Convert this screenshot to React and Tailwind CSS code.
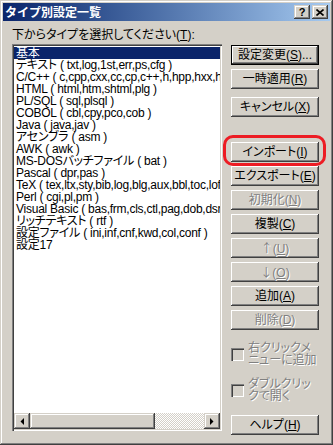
import React from "react";

const TYPES = [
  "基本",
  "テキスト ( txt,log,1st,err,ps,cfg )",
  "C/C++ ( c,cpp,cxx,cc,cp,c++,h,hpp,hxx,hh,inl )",
  "HTML ( html,htm,shtml,plg )",
  "PL/SQL ( sql,plsql )",
  "COBOL ( cbl,cpy,pco,cob )",
  "Java ( java,jav )",
  "アセンブラ ( asm )",
  "AWK ( awk )",
  "MS-DOSバッチファイル ( bat )",
  "Pascal ( dpr,pas )",
  "TeX ( tex,ltx,sty,bib,log,blg,aux,bbl,toc,lof,lot,idx,ind,glo )",
  "Perl ( cgi,pl,pm )",
  "Visual Basic ( bas,frm,cls,ctl,pag,dob,dsr,vb )",
  "リッチテキスト ( rtf )",
  "設定ファイル ( ini,inf,cnf,kwd,col,conf )",
  "設定17",
];

const RAISED =
  "shadow-[inset_-1px_-1px_#404040,inset_1px_1px_#fff,inset_-2px_-2px_#808080,inset_2px_2px_#d4d0c8]";
const RAISED_SB =
  "shadow-[inset_-1px_-1px_#404040,inset_1px_1px_#d4d0c8,inset_-2px_-2px_#808080,inset_2px_2px_#fff]";
const SUNKEN =
  "shadow-[inset_1px_1px_#808080,inset_2px_2px_#404040,inset_-1px_-1px_#fff,inset_-2px_-2px_#d4d0c8]";

function Btn({ label, accel, suffix = "", disabled, isDefault, arrow, className = "" }) {
  return (
    <div
      className={`flex h-[20px] w-[88px] shrink-0 items-center justify-center bg-[#d4d0c8] text-[12px] leading-[12px] ${
        isDefault ? "border border-black" : ""
      } ${RAISED} ${
        disabled ? "text-[#808080] [text-shadow:1px_1px_0_#fff]" : "text-black"
      } ${className}`}
    >
      <span className="whitespace-nowrap">
        <span className={arrow ? "font-['Noto_Sans_CJK_JP',sans-serif]" : ""}>{label}</span>(
        <u className="underline underline-offset-[1px]">{accel}</u>){suffix}
      </span>
    </div>
  );
}

function Check({ lines, className = "" }) {
  return (
    <div className={`flex items-center gap-[4px] ${className}`}>
      <div className={`h-[13px] w-[13px] shrink-0 bg-[#d4d0c8] ${SUNKEN}`} />
      <div className="text-[12px] leading-[12px] text-[#808080] [text-shadow:1px_1px_0_#fff]">
        {lines.map((l) => (
          <div key={l}>{l}</div>
        ))}
      </div>
    </div>
  );
}

function Arrow({ dir }) {
  return (
    <svg width="4" height="7" viewBox="0 0 4 7">
      {dir === "left" ? (
        <polygon points="4,0 4,7 0.5,3.5" fill="#000" />
      ) : (
        <polygon points="0,0 0,7 3.5,3.5" fill="#000" />
      )}
    </svg>
  );
}

export default function App() {
  return (
    <div
      className={`relative flex h-[445px] w-[333px] flex-col bg-[#d4d0c8] p-[3px] font-['Liberation_Sans','Noto_Sans_CJK_JP',sans-serif] [font-feature-settings:'palt'] shadow-[inset_-1px_-1px_#404040,inset_1px_1px_#d4d0c8,inset_-2px_-2px_#808080,inset_2px_2px_#fff]`}
    >
      {/* Title bar */}
      <div className="flex h-[18px] shrink-0 items-center bg-gradient-to-r from-[#0a246a] to-[#a6caf0] pl-[2px] pr-[2px]">
        <span className="font-['Noto_Sans_CJK_JP',sans-serif] text-[12px] font-bold leading-[12px] text-white [font-feature-settings:normal]">
          タイプ別設定一覧
        </span>
        <div className="ml-auto flex gap-[2px]">
          <div className={`flex h-[14px] w-[16px] items-center justify-center bg-[#d4d0c8] ${RAISED_SB}`}>
            <span className="text-[11px] font-bold leading-[11px] text-black">?</span>
          </div>
          <div className={`flex h-[14px] w-[16px] items-center justify-center bg-[#d4d0c8] ${RAISED_SB}`}>
            <svg width="8" height="7" viewBox="0 0 8 7">
              <path d="M0.5 0.5 L7.5 6.5 M7.5 0.5 L0.5 6.5" stroke="#000" strokeWidth="1.6" />
            </svg>
          </div>
        </div>
      </div>

      {/* Body */}
      <div className="flex flex-1 pl-[9px] pr-[11px] pt-[8px]">
        {/* Left column */}
        <div className="flex w-[210px] flex-col">
          <div className="h-[13px] whitespace-nowrap text-[12px] leading-[13px] text-black">
            下からタイプを選択してください(<u className="underline underline-offset-[1px]">T</u>):
          </div>
          <div className={`mt-[2px] flex h-[387px] flex-col bg-white p-[2px] ${SUNKEN}`}>
            <div className="flex-1 overflow-hidden pt-[1px]">
              {TYPES.map((t, i) => (
                <div
                  key={t}
                  className={`h-[12px] whitespace-nowrap pl-[2px] text-[12px] leading-[12px] tracking-[-0.25px] ${
                    i === 0 ? "bg-[#0a246a] text-white" : "text-black"
                  }`}
                >
                  {t}
                </div>
              ))}
            </div>
            {/* Horizontal scrollbar */}
            <div className="flex h-[16px] shrink-0">
              <div className={`flex h-[16px] w-[16px] items-center justify-center bg-[#d4d0c8] ${RAISED_SB}`}>
                <Arrow dir="left" />
              </div>
              <div className={`h-[16px] w-[125px] bg-[#d4d0c8] ${RAISED_SB}`} />
              <div className="h-[16px] flex-1 bg-[repeating-conic-gradient(#d4d0c8_0_25%,#fff_0_50%)] bg-[length:2px_2px]" />
              <div className={`flex h-[16px] w-[16px] items-center justify-center bg-[#d4d0c8] ${RAISED_SB}`}>
                <Arrow dir="right" />
              </div>
            </div>
          </div>
        </div>

        {/* Right column */}
        <div className="ml-[9px] flex w-[88px] flex-col">
          <Btn label="設定変更" accel="S" suffix="..." isDefault className="mt-[16px]" />
          <Btn label="一時適用" accel="R" className="mt-[4px]" />
          <Btn label="キャンセル" accel="X" className="mt-[8px]" />
          <Btn label="インポート" accel="I" className="mt-[25px]" />
          <Btn label="エクスポート" accel="E" className="mt-[4px]" />
          <Btn label="初期化" accel="N" disabled className="mt-[4px]" />
          <Btn label="複製" accel="C" className="mt-[4px]" />
          <Btn label="↑" accel="U" disabled arrow className="mt-[4px]" />
          <Btn label="↓" accel="O" disabled arrow className="mt-[4px]" />
          <Btn label="追加" accel="A" className="mt-[4px]" />
          <Btn label="削除" accel="D" disabled className="mt-[4px]" />
          <Check lines={["右クリックメ", "ニューに追加"]} className="mt-[12px]" />
          <Check lines={["ダブルクリッ", "クで開く"]} className="mt-[12px]" />
          <Btn label="ヘルプ" accel="H" className="mt-[13px]" />
        </div>
      </div>

      {/* Red annotation around import button */}
      <div className="pointer-events-none absolute left-[223px] top-[135px] h-[31px] w-[103px] rounded-[10px] border-[3px] border-[#ed1c24]" />
    </div>
  );
}
